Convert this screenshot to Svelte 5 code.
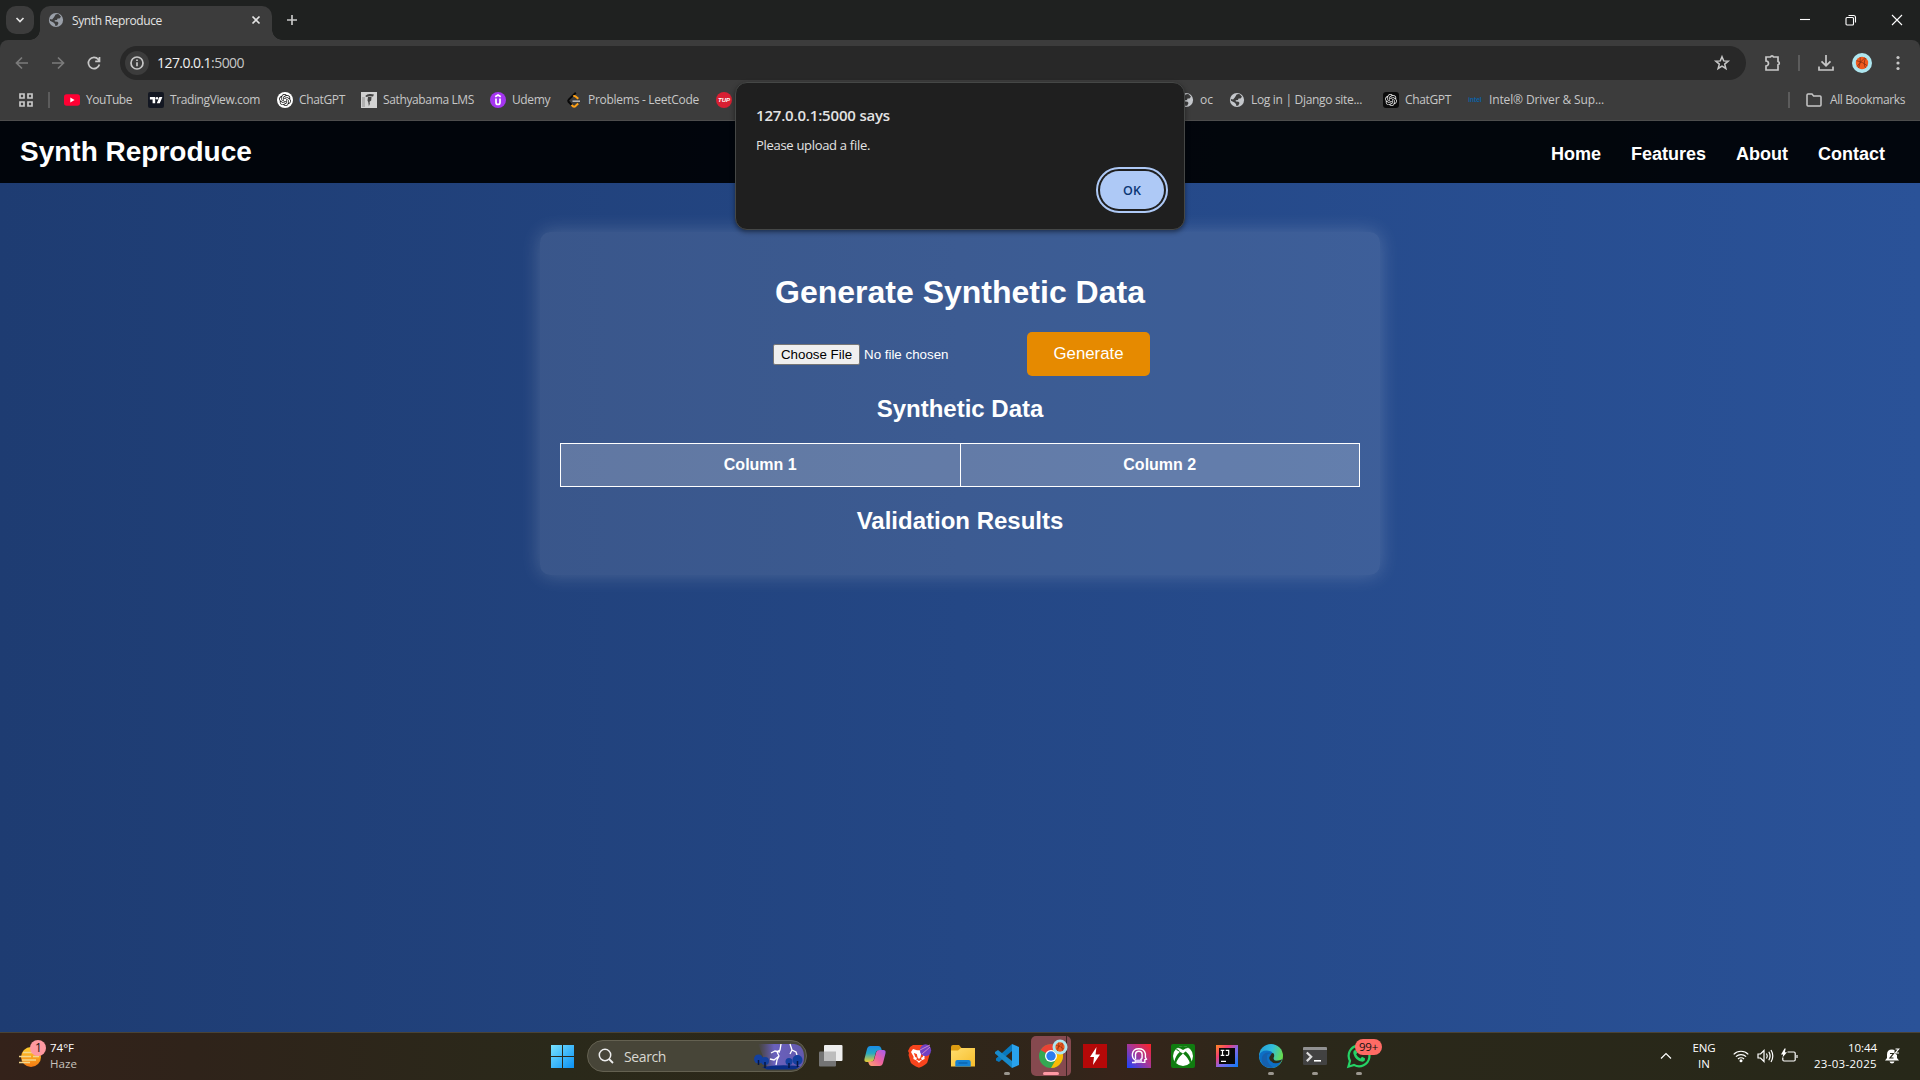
<script>
  // Adjusts a label's tracking so that its text spans the given width.
  function fit(node, width) {
    node.style.letterSpacing = '0px';
    const range = document.createRange();
    range.selectNodeContents(node);
    const natural = range.getBoundingClientRect().width;
    node.style.letterSpacing = `${(width - natural) / node.textContent.length}px`;
  }

  const bookmarks = [
    { icon: 'youtube', label: 'YouTube', width: 46 },
    { icon: 'tradingview', label: 'TradingView.com', width: 90, after: 1 },
    { icon: 'gpt', label: 'ChatGPT', width: 46 },
    { icon: 'lms', label: 'Sathyabama LMS', width: 91 },
    { icon: 'udemy', label: 'Udemy', width: 38 },
    { icon: 'leetcode', label: 'Problems - LeetCode', width: 111, after: 1 },
    { icon: 'tup', label: '', width: 0 },
  ];
  const moreBookmarks = [
    { icon: 'globe', label: 'oc', width: 13 },
    { icon: 'globe', label: 'Log in | Django site...', width: 111, after: 5 },
    { icon: 'gptdark', label: 'ChatGPT', width: 46 },
    { icon: 'intel', label: 'Intel® Driver & Sup...', width: 115 },
  ];
  const links = ['Home', 'Features', 'About', 'Contact'];
  const apps = [
    { icon: 'taskview' },
    { icon: 'copilot' },
    { icon: 'brave' },
    { icon: 'folder' },
    { icon: 'vscode', open: true },
    { icon: 'chrome', active: true },
    { icon: 'bolt' },
    { icon: 'head' },
    { icon: 'xbox' },
    { icon: 'idea' },
    { icon: 'edge', open: true },
    { icon: 'terminal', open: true },
    { icon: 'whatsapp', open: true },
  ];
</script>

{#snippet globe(tint)}
  <circle cx="8" cy="8" r="7.1" fill={tint} />
  <path d="M7.6 2.6q1.600-.9 3.200-.3l2.200 2.500-1.500 1.700H9.600L8.900 8 6.600 8.300l.3 1.200 2.600.2 1 1.400-1.200 2.300-1.900.7-.4-2.200-1.500-1.500L2 8.800l-.2-1.700 2.300.5L6 5.200z" fill="#3c3c3c" />
{/snippet}

{#snippet knot(fill)}
  <path {fill} transform="translate(2 2) scale(.5)" d="M22.2819 9.8211a5.9847 5.9847 0 0 0-.5157-4.9108 6.0462 6.0462 0 0 0-6.5098-2.9A6.0651 6.0651 0 0 0 4.9807 4.1818a5.9847 5.9847 0 0 0-3.9977 2.9 6.0462 6.0462 0 0 0 .7427 7.0966 5.98 5.98 0 0 0 .511 4.9107 6.051 6.051 0 0 0 6.5146 2.9001A5.9847 5.9847 0 0 0 13.2599 24a6.0557 6.0557 0 0 0 5.7718-4.2058 5.9894 5.9894 0 0 0 3.9977-2.9001 6.0557 6.0557 0 0 0-.7475-7.0729zm-9.022 12.6081a4.4755 4.4755 0 0 1-2.8764-1.0408l.1419-.0804 4.7783-2.7582a.7948.7948 0 0 0 .3927-.6813v-6.7369l2.02 1.1686a.071.071 0 0 1 .038.052v5.5826a4.504 4.504 0 0 1-4.4945 4.4944zm-9.6607-4.1254a4.4708 4.4708 0 0 1-.5346-3.0137l.142.0852 4.783 2.7582a.7712.7712 0 0 0 .7806 0l5.8428-3.3685v2.3324a.0804.0804 0 0 1-.0332.0615L9.74 19.9502a4.4992 4.4992 0 0 1-6.1408-1.6464zM2.3408 7.8956a4.485 4.485 0 0 1 2.3655-1.9728V11.6a.7664.7664 0 0 0 .3879.6765l5.8144 3.3543-2.0201 1.1685a.0757.0757 0 0 1-.071 0l-4.8303-2.7865A4.504 4.504 0 0 1 2.3408 7.872zm16.5963 3.8558L13.1038 8.364 15.1192 7.2a.0757.0757 0 0 1 .071 0l4.8303 2.7913a4.4944 4.4944 0 0 1-.6765 8.1042v-5.6772a.79.79 0 0 0-.407-.667zm2.0107-3.0231l-.142-.0852-4.7735-2.7818a.7759.7759 0 0 0-.7854 0L9.409 9.2297V6.8974a.0662.0662 0 0 1 .0284-.0615l4.8303-2.7866a4.4992 4.4992 0 0 1 6.6802 4.66zM8.3065 12.863l-2.02-1.1638a.0804.0804 0 0 1-.038-.0567V6.0742a4.4992 4.4992 0 0 1 7.3757-3.4537l-.142.0805L8.704 5.459a.7948.7948 0 0 0-.3927.6813zm1.0976-2.3654l2.602-1.4998 2.6069 1.4998v2.9994l-2.5974 1.4997-2.6067-1.4997Z" />
{/snippet}

{#snippet bookmarkIcon(name)}
  <svg class="fav" viewBox="0 0 16 16">
    {#if name === 'youtube'}
      <rect y="2.3" width="16" height="11.4" rx="2.6" fill="#f03" />
      <path d="M6.3 5.6v4.8L10.6 8z" fill="#fff" />
    {:else if name === 'tradingview'}
      <rect width="16" height="16" rx="2" fill="#131722" />
      <path d="M1.900 5h5.300v6.200H4.600V7.400H1.900zM11.400 5h3l-2.600 6.200h-3z" fill="#fff" />
      <circle cx="9" cy="6.2" r="1.3" fill="#fff" />
    {:else if name === 'gpt'}
      <circle cx="8" cy="8" r="8" fill="#fff" />
      {@render knot('#111')}
    {:else if name === 'gptdark'}
      <rect width="16" height="16" rx="3" fill="#0b0b0b" />
      {@render knot('#eee')}
    {:else if name === 'lms'}
      <rect width="16" height="16" fill="#d2d2d2" />
      <rect x="1" y="5" width="3" height="10" fill="#b0b0b0" />
      <path d="M4.500 3.700Q6 2 8.500 2q2.500-.2 4.500.6l-1 1.900-3.500-.3-3.600.8zM7 5h3.500l-.3 3.500-1.700 1.200.3 2-.9 2.500-.6-4-.8-1.700z" fill="#444" />
    {:else if name === 'udemy'}
      <circle cx="8" cy="8" r="8" fill="#a435f0" />
      <path d="M5.200 4.700 8 3l2.800 1.700M6 6.500v4a2 2 0 0 0 4 0v-4" fill="none" stroke="#fff" stroke-width="1.7" />
    {:else if name === 'leetcode'}
      <path d="M9.800.8 2.700 7.600q-1 1-.1 2.200l3 3.100" fill="none" stroke="#080808" stroke-width="2" />
      <path d="M7.300 4.400q1.200-.9 2.300 0l2.700 2.400M5.600 12.900l1.100 1.200q1.400 1.100 2.800 0l2.700-2.500" fill="none" stroke="#ffa116" stroke-width="2" />
      <path d="M6.500 9.200H14" stroke="#b3b3b3" stroke-width="1.600" />
    {:else if name === 'tup'}
      <circle cx="8" cy="8" r="8" fill="#d81f32" />
      <text x="8" y="10" text-anchor="middle" class="tup">TUP</text>
    {:else if name === 'globe'}
      {@render globe('#c4c7cb')}
    {:else if name === 'intel'}
      <text x="8" y="10.3" text-anchor="middle" class="intel">intel</text>
    {/if}
  </svg>
{/snippet}

{#snippet bookmark(item)}
  <span class="bookmark" style:margin-right="{item.after ?? 0}px">
    {@render bookmarkIcon(item.icon)}
    {#if item.label}
      <span class="bm-label" style:width="{item.width}px" use:fit={item.width}>{item.label}</span>
    {/if}
  </span>
{/snippet}

{#snippet ball(x, y, r)}
  <circle cx={x} cy={y} r={r} fill="#aee6ef" />
  <g transform="translate({x} {y}) scale({r / 10})">
    <circle r="6.2" fill="#f05a1e" />
    <path d="M-5.500-2.400Q1-1 5.400 2.800M-1.800-5.800Q-1 0-3.400 5M3-5.300Q-2-1-5 3.500M3.500-5Q1 1 3.500 4.800" fill="none" stroke="#7a2a12" stroke-width=".7" />
  </g>
{/snippet}

{#snippet appIcon(name)}
  <svg class="app-icon" viewBox="0 0 24 24">
    {#if name === 'taskview'}
      <rect x="0" y="7.5" width="17" height="15" rx="1" fill="#747474" />
      <rect x="5" y="1" width="18.5" height="16" rx="1" fill="#eee" />
      <path d="M5 7.500h12V17H5z" fill="#bdbdbd" />
    {:else if name === 'copilot'}
      <path d="M7.400 2h8q2 0 2.700 2l.8 2.600h-3.500q-2 0-2.600 2l-2 7.100q-.8 2.400-3.300 2.400H3.800q-3 0-2.300-3.300L4 5q.8-3 3.400-3z" fill="url(#copA)" />
      <path d="M16.600 22h-8q-2 0-2.700-2l-.8-2.600h3.500q2 0 2.600-2l2-7.100q.8-2.400 3.300-2.400h3.700q3 0 2.300 3.300L20 19q-.8 3-3.400 3z" fill="url(#copB)" />
    {:else if name === 'brave'}
      <path d="m6 1-3 2L1 7l1 2-.5 2 2.200 7.500Q5 21 12 23.800 19 21 20.300 18.500L22.500 11 22 9l1-2-4-4-3-2z" fill="#f7441d" />
      <path d="m6 5 4 1.200h4L18 5l2 3-2.600 4.700.2 2.200-3.200 1.700L12 19l-2.400-2.400L6.400 15l.2-2.300L4 8z" fill="#fff" />
      <path d="m6.800 9 3 1 .8 3.400L12 15l1.400-1.600.8-3.400 3-1-1.500 4-1.800 1 1 1.400-2.900 1.700-2.900-1.700 1-1.400-1.800-1z" fill="#f7441d" />
      <ellipse cx="18.5" cy="6.2" rx="5.6" ry="6" fill="#7040c4" />
      <path d="m13 6 10-5M15 10l8-7" stroke="#e49ac8" stroke-width=".8" />
    {:else if name === 'folder'}
      <path d="M0 3q0-2 2-2h6l2.500 3H22q2 0 2 2v4H0z" fill="#dd9c12" />
      <path d="M0 6.500h7L10 4h14v18.500H0z" fill="url(#folderG)" />
      <path d="M4.300 22.500V18q0-2 2-2h11.400q2 0 2 2v4.500z" fill="#1481d4" />
      <path d="M7.500 19h9" stroke="#0a5ea8" stroke-width="1.2" />
    {:else if name === 'vscode'}
      <path d="M17 0v7L4 18l-3-1.400v-2L17 0z" fill="#0878bd" />
      <path d="m0 8 3-2 14 11v7L0 9.600z" fill="#188acb" />
      <path d="M17 0 24 3v18l-7 3z" fill="#29a2ed" />
    {:else if name === 'chrome'}
      <circle cx="12" cy="12" r="12" fill="#34a853" />
      <path d="M12 12 1.600 6A12 12 0 0 1 22.400 6z" fill="#ea4335" />
      <path d="M12 6h10.400A12 12 0 0 1 12 24l5.200-9z" fill="#fbbc05" />
      <circle cx="12" cy="12" r="6" fill="#fff" />
      <circle cx="12" cy="12" r="4.7" fill="#2b7cf0" />
      {@render ball(21, 3, 7.5)}
    {:else if name === 'bolt'}
      <path d="M0 0h24v24H0z" fill="#b50808" />
      <path d="M13.500 3 7 13h4l-1 8 7-10.500h-4.500z" fill="#fff" />
    {:else if name === 'head'}
      <path d="M0 0h24v24H0z" fill="url(#headG)" />
      <path d="M5 18.500h3.400v-2.300q-3.500-2-3-6.400.8-5 6.400-5t6.600 5v3.600l1 1.700-1.600.7v2.600h-7.200M8.500 15V10.200q.2-3 3.400-3t3.200 3v3q0 2.200-2 2.200" fill="none" stroke="#fff" stroke-width="1.4" />
      <path d="M8.500 15.600h6.500V19H8.500z" fill="#e2cdf5" />
    {:else if name === 'xbox'}
      <rect width="24" height="24" rx="2" fill="#107c10" />
      <circle cx="12" cy="12" r="10" fill="#fff" />
      <path d="M5.600 4.300Q8 3.200 12 6q4-2.800 6.400-1.700Q15.600 2 12 2T5.600 4.300zM12 9.500q-6 5-6.800 9.800-.9-.6-1.700-1.900Q4.500 11.700 9.200 7.600L6.500 5.300 4.500 5.500M12 9.500q6 5 6.800 9.800.9-.6 1.700-1.900-1-5.700-5.700-9.800l2.700-2.300" fill="#107c10" />
    {:else if name === 'idea'}
      <path d="M1 1h22v22H1z" fill="url(#ideaG)" />
      <path d="M4 4h16v16H4z" fill="#090909" />
      <path d="M5.700 6.300h3.600M7.500 6.300v5M5.700 11.300h3.600M10.700 6.300h3v3.900q0 1.100-1.200 1.100h-1.700M6 17.300h5" fill="none" stroke="#fff" stroke-width="1.2" />
    {:else if name === 'edge'}
      <circle cx="12" cy="12" r="12" fill="url(#edgeA)" />
      <path d="M0 12Q1.400 6.300 8 6.500c5 .2 7.300 3.500 6.400 6.300-.7 2.500.8 4 3.800 4 2.500 0 4.400-1.200 5-1.500Q20.500 24 12 24 1 23 0 12z" fill="#0d6fc6" />
      <path d="M8.400 10.400Q6 18 14.400 23.600 1 25 3 13q1.600-4.700 6.700-4.500 3.500.2 4.800 3-2.700-3.500-6.100-1.100z" fill="#1560ae" />
      <path d="M11.500 11.500q-2.400 2.300-.2 5 3.700 4.500 10 1.800l1.900-2.900q-7.700 3-8.600-.5-.3-1 .5-2.500.4-1.800-.7-3.200-1.800-1-2.900 2.300z" fill="#2d2b19" />
    {:else if name === 'terminal'}
      <rect y="3" width="24" height="18" rx="1.3" fill="#424242" />
      <path d="M0 4.200Q0 3 1.200 3h21.600Q24 3 24 4.200V6H0z" fill="#929292" />
      <path d="m3.800 8.500 4.400 4.300-4.400 4.300" fill="none" stroke="#ddd" stroke-width="2.2" />
      <path d="M11 16.800h7" stroke="#fff" stroke-width="1.6" />
    {:else if name === 'whatsapp'}
      <path d="m1.400 22.700 1.600-5.800a10.400 10.400 0 1 1 4 4z" fill="none" stroke="#25d366" stroke-width="2.2" />
      <path d="M7 6.500q1.400-1.200 2.200 0l1 2.200-1 1.700q1.500 3 4.400 4l1.400-1.600 2.900 1.400q.6 3-2.500 3.500Q8.500 17.200 6.400 9.800 6 7.500 7 6.500z" fill="#25d366" />
    {/if}
  </svg>
{/snippet}

<svg class="defs">
  <defs>
    <linearGradient id="copA" x1="0" y1="0" x2="0" y2="1"><stop stop-color="#1a8be8" /><stop offset=".45" stop-color="#25a9c3" /><stop offset="1" stop-color="#efcf2c" /></linearGradient>
    <linearGradient id="copB" x1="1" y1="0" x2="0" y2="1"><stop stop-color="#a45cf3" /><stop offset=".5" stop-color="#ed629f" /><stop offset="1" stop-color="#ffa56b" /></linearGradient>
    <linearGradient id="folderG" x1="0" y1="0" x2="1" y2="1"><stop stop-color="#ffdd6e" /><stop offset="1" stop-color="#f7bd2b" /></linearGradient>
    <linearGradient id="headG" x1="1" y1="0" x2="0" y2="1"><stop stop-color="#ff2222" /><stop offset=".5" stop-color="#a4379c" /><stop offset="1" stop-color="#1644ff" /></linearGradient>
    <linearGradient id="ideaG" x1="0" y1="0" x2="1" y2="1"><stop stop-color="#ff8b22" /><stop offset=".3" stop-color="#f43f71" /><stop offset=".55" stop-color="#8267e8" /><stop offset="1" stop-color="#087cfa" /></linearGradient>
    <linearGradient id="edgeA" x1="0" y1="0" x2="1" y2=".35"><stop stop-color="#229bd7" /><stop offset=".55" stop-color="#31bddd" /><stop offset="1" stop-color="#66dc52" /></linearGradient>
    <linearGradient id="winG" x1="0" y1="0" x2="1" y2="1" gradientUnits="objectBoundingBox"><stop stop-color="#77e2ff" /><stop offset="1" stop-color="#0a91f5" /></linearGradient>
    <linearGradient id="sunG" x1="0" y1="0" x2="0" y2="1"><stop stop-color="#ffce2e" /><stop offset="1" stop-color="#f47912" /></linearGradient>
    <linearGradient id="stormG" x1="0" y1="0" x2="1" y2="0"><stop stop-color="#5c54a8" stop-opacity="0" /><stop offset=".35" stop-color="#6a61bd" /><stop offset="1" stop-color="#6359ad" /></linearGradient>
  </defs>
</svg>

<div class="screen">
  <header class="tabs">
    <span class="tab-search"><svg width="10" height="10" viewBox="0 0 10 10"><path d="m1.500 3 3.500 3.500L8.500 3" class="line bright" /></svg></span>
    <div class="tab">
      <svg width="16" height="16" viewBox="0 0 16 16">{@render globe('#9aa0a9')}</svg>
      <span class="tab-title" use:fit={90}>Synth Reproduce</span>
      <svg width="10" height="10" viewBox="0 0 10 10"><path d="m1.500 1.500 7 7m0-7-7 7" class="line bright" /></svg>
    </div>
    <svg class="new-tab" width="12" height="12" viewBox="0 0 12 12"><path d="M6 1v10M1 6h10" class="line" /></svg>
    <div class="window-buttons">
      <svg width="12" height="12" viewBox="0 0 12 12"><path d="M1 5.500h10" class="thin" /></svg>
      <svg width="12" height="12" viewBox="0 0 12 12"><rect x="1" y="3.500" width="7.500" height="7.500" rx="1" class="thin" /><path d="M3.500 1.500h5q2 0 2 2v5" class="thin" /></svg>
      <svg width="12" height="12" viewBox="0 0 12 12"><path d="m1 1 10 10M11 1 1 11" class="thin" /></svg>
    </div>
  </header>

  <div class="toolbar">
    <div class="nav-buttons">
      <svg width="14" height="14" viewBox="0 0 14 14"><path d="M13 7H1.500M7 1.500 1.500 7 7 12.500" class="line dim" /></svg>
      <svg width="14" height="14" viewBox="0 0 14 14"><path d="M1 7h11.500M7 1.500 12.500 7 7 12.500" class="line dim" /></svg>
      <svg width="14" height="14" viewBox="0 0 14 14"><path d="M12.400 8.500A5.600 5.600 0 1 1 11.300 3.400L12.300 4.700M12.500 1v4.300H8.200" class="line" /></svg>
    </div>
    <div class="omnibox">
      <span class="site-info"><svg width="14" height="14" viewBox="0 0 14 14"><circle cx="7" cy="7" r="6" class="line" /><path d="M7 6.200v4M7 3.600v1.500" class="line" /></svg></span>
      <span class="url" use:fit={87}>127.0.0.1<span class="port">:5000</span></span>
      <svg class="star" width="16" height="16" viewBox="0 0 16 16"><path d="m8 1.700 1.700 4.200 4.500.3-3.500 2.900 1.200 4.400L8 11.100l-3.900 2.400 1.200-4.400-3.500-2.900 4.500-.3z" class="line slim" /></svg>
    </div>
    <svg class="puzzle" width="18" height="18" viewBox="0 0 18 18"><path d="M2 3h4.500a1.600 1.600 0 0 1 3 0H14v4.500a1.700 1.700 0 0 1 0 3.300V16H2v-4a2.400 2.400 0 0 0 0-5z" class="line" /></svg>
    <i class="sep tool-sep"></i>
    <svg class="download" width="18" height="18" viewBox="0 0 18 18"><path d="M9 1v10.500M4.500 7.300 9 11.700l4.500-4.400M2 12.500V16h14v-3.500" class="line" /></svg>
    <svg class="avatar" width="20" height="20" viewBox="0 0 20 20">{@render ball(10, 10, 10)}</svg>
    <svg class="dots" width="4" height="16" viewBox="0 0 4 16"><g fill="#c7c7c7"><circle cx="2" cy="2.500" r="1.600" /><circle cx="2" cy="8" r="1.600" /><circle cx="2" cy="13.500" r="1.600" /></g></svg>
  </div>

  <div class="bookmarks">
    <svg class="grid-icon" width="14" height="14" viewBox="0 0 14 14"><path d="M1 1h4v4H1zM9 1h4v4H9zM1 9h4v4H1zM9 9h4v4H9z" class="line" /></svg>
    <i class="sep"></i>
    <div class="bm-list first">
      {#each bookmarks as item}{@render bookmark(item)}{/each}
    </div>
    <div class="bm-list">
      {#each moreBookmarks as item}{@render bookmark(item)}{/each}
    </div>
    <div class="all">
      <i class="sep"></i>
      <svg width="16" height="14" viewBox="0 0 16 14"><path d="M1 2q0-1 1-1h4l1.600 2H14q1 0 1 1v8q0 1-1 1H2q-1 0-1-1z" class="line slim" /></svg>
      <span class="bm-label" use:fit={75}>All Bookmarks</span>
    </div>
  </div>

  <main class="page">
    <nav class="site-nav">
      <span class="brand">Synth Reproduce</span>
      <div class="links">
        {#each links as link}<a href="#{link.toLowerCase()}">{link}</a>{/each}
      </div>
    </nav>
    <section class="card">
      <h1>Generate Synthetic Data</h1>
      <div class="form">
        <button class="choose">Choose File</button>
        <span class="no-file">No file chosen</span>
        <button class="generate">Generate</button>
      </div>
      <h2>Synthetic Data</h2>
      <table>
        <thead><tr><th>Column 1</th><th>Column 2</th></tr></thead>
      </table>
      <h2 class="results">Validation Results</h2>
    </section>
  </main>

  <footer class="taskbar">
    <div class="weather">
      <svg width="30" height="32" viewBox="0 0 30 32">
        <circle cx="15" cy="17" r="10" fill="url(#sunG)" />
        <path d="M7 12.500h12M3 16.500h12m2 0h6M6 20h14M3 22.500h11" stroke="#f3d78b" stroke-width="1.500" />
        <circle cx="22" cy="8" r="8" fill="#ff99a0" />
        <text x="22.500" y="12" text-anchor="middle" class="count">1</text>
      </svg>
      <div class="weather-text"><span use:fit={24}>74°F</span><span class="muted" use:fit={27}>Haze</span></div>
    </div>
    <svg class="start" width="23" height="23" viewBox="0 0 23 23"><path d="M0 0h11v11H0zM12 0h11v11H12zM0 12h11v11H0zM12 12h11v11H12z" fill="url(#winG)" /></svg>
    <div class="search">
      <svg width="16" height="16" viewBox="0 0 16 16"><circle cx="7" cy="7" r="5.700" fill="none" stroke="#eee" stroke-width="1.500" /><path d="m11 11 4 4" stroke="#eee" stroke-width="1.800" /></svg>
      <span use:fit={42}>Search</span>
      <svg class="storm" width="50" height="27" viewBox="0 0 50 27">
        <path d="M4 1h36q10 1 10 13T40 26H14z" fill="url(#stormG)" />
        <path d="m27 1-1 6-3 2 2 4-2 4-1 5m3-9-5 4-4-1m10-7-5-1-4 2M36 1l2 6 4 2 1 3m-5-5-2 4" fill="none" stroke="#fff" stroke-width="1.300" />
        <g fill="#14409f"><circle cx="4.500" cy="16" r="4.500" /><circle cx="11" cy="18" r="4" /><circle cx="35" cy="18.500" r="3.500" /><circle cx="43.500" cy="17" r="5" /></g>
        <path d="M8 24q16-3 38-1-3 3.500-8 3.500H13z" fill="#0a2d86" />
        <path d="M4.500 17v5m6.500-3v6m24-5v5m8.500-7v6" stroke="#061642" stroke-width="1.500" />
      </svg>
    </div>
    <div class="apps">
      {#each apps as app}
        <span class="app" class:active={app.active} class:open={app.open}>
          {@render appIcon(app.icon)}
          {#if app.icon === 'whatsapp'}<b class="badge" use:fit={19}>99+</b>{/if}
        </span>
      {/each}
    </div>
    <div class="tray">
      <svg class="chevron" width="12" height="8" viewBox="0 0 12 8"><path d="m1 6.500 5-5 5 5" class="white" /></svg>
      <div class="lang"><span use:fit={23}>ENG</span><span use:fit={12}>IN</span></div>
      <svg class="wifi" width="16" height="14" viewBox="0 0 16 14"><path d="M.7 5.300a10.300 10.300 0 0 1 14.600 0M2.900 7.700a7.200 7.200 0 0 1 10.200 0M5 10a4.200 4.200 0 0 1 6 0" class="white" /><circle cx="8" cy="11.800" r="1.500" fill="#fff" /></svg>
      <svg width="17" height="14" viewBox="0 0 17 14"><path d="M1 5h2.500L7 1.500v11L3.500 9H1zM9.500 4.500q1.600 2.500 0 5M11.800 2.800q2.600 4.200 0 8.400M14 1q3.600 6 0 12" class="white" /></svg>
      <svg class="battery" width="17" height="14" viewBox="0 0 17 14"><path d="M6.500 3h6.500q1.200 0 1.200 1.200v6.600q0 1.200-1.200 1.200H3q-1.200 0-1.200-1.200V8.500M16 6v3" class="white" /><path d="M3.500-.5 0 5.500h2.200L1.500 8.500 6 3.200H3.900L4.700-.5z" fill="#fff" /></svg>
      <div class="clock"><span use:fit={29}>10:44</span><span use:fit={63}>23-03-2025</span></div>
      <svg class="bell" width="15" height="16" viewBox="0 0 15 16"><path d="M0 12.500 2 10V6.500Q2 1.500 7 1.500q1.500 0 2.500.5v3l2.500 2v3l2 2.500zM4.500 13.500h5q-.5 2-2.500 2t-2.500-2z" fill="#fff" /><path d="M5 5.500h3.500L5 10h3.500" fill="none" stroke="#27281a" stroke-width="1.200" /><path d="M10.500 1h3.200l-3.200 4h3.500" class="white" /></svg>
    </div>
  </footer>

  <div class="dialog" role="alertdialog">
    <strong><span use:fit={134}>127.0.0.1:5000 says</span></strong>
    <p><span use:fit={114}>Please upload a file.</span></p>
    <button class="ok">OK</button>
  </div>
</div>

<style>
  :global(body) { overflow: hidden; background: #1f2120; }
  * { box-sizing: border-box; }
  svg { display: block; flex: none; overflow: visible; }
  button { border: 0; margin: 0; padding: 0; font-family: inherit; }
  .defs { position: absolute; width: 0; height: 0; }
  .screen { position: relative; display: flex; flex-direction: column; width: 1920px; height: 1080px; overflow: hidden; background: #1f2120; font-family: "Open Sans", "Noto Sans", sans-serif; font-size: 12px; white-space: nowrap; }
  .line { fill: none; stroke: #c7c7c7; stroke-width: 1.7; }
  .bright { stroke: #e3e3e3; }
  .dim { stroke: #7b7b7b; }
  .slim { stroke-width: 1.5; }
  .thin { fill: none; stroke: #fff; stroke-width: 1.1; }
  .white { fill: none; stroke: #fff; stroke-width: 1.2; }

  .tabs { display: flex; align-items: center; height: 40px; padding: 0 17px 0 6px; background: #1f2120; }
  .tab-search { display: grid; place-items: center; width: 28px; height: 28px; border-radius: 10px; background: #3c3c3c; }
  .tab { position: relative; display: flex; align-items: center; align-self: flex-end; width: 232px; height: 34px; margin-left: 6px; padding: 0 11px 6px 8px; border-radius: 10px 10px 0 0; background: #3c3c3c; }
  .tab::before, .tab::after { content: ""; position: absolute; bottom: 0; width: 10px; height: 10px; }
  .tab::before { left: -10px; background: radial-gradient(circle at 0 0, transparent 9.5px, #3c3c3c 10px); }
  .tab::after { right: -10px; background: radial-gradient(circle at 100% 0, transparent 9.5px, #3c3c3c 10px); }
  .tab-title { flex: 1; margin-left: 8px; padding-top: 2px; color: #e3e3e3; line-height: 18px; }
  .new-tab { margin-left: 14px; }
  .window-buttons { display: flex; gap: 34px; margin-left: auto; }

  .toolbar { display: flex; align-items: center; height: 46px; border-radius: 8px 8px 0 0; background: #3c3c3c; }
  .nav-buttons { display: flex; gap: 22px; width: 120px; padding-left: 15px; }
  .omnibox { display: flex; align-items: center; width: 1626px; height: 34px; padding: 0 16px 0 5px; border-radius: 17px; background: #282828; }
  .site-info { display: grid; place-items: center; width: 24px; height: 24px; border-radius: 50%; background: #3c3c3c; }
  .url { margin-left: 8px; color: #f0f0f0; font-size: 14px; line-height: 20px; }
  .port { color: #c7c7c7; }
  .star { margin-left: auto; }
  .puzzle { margin-left: 18px; }
  .sep { width: 2px; height: 16px; background: #5c5c5c; }
  .tool-sep { margin-left: 16px; }
  .download { margin-left: 17px; }
  .avatar { margin-left: 17px; }
  .dots { margin-left: 24px; }

  .bookmarks { display: flex; align-items: center; height: 35px; padding: 0 15px 6px 19px; background: #3c3c3c; border-bottom: 1px solid #4d4d4d; }
  .bookmarks .grid-icon { margin-right: 15px; }
  .bm-list { display: flex; gap: 16px; }
  .bm-list.first { width: 1114px; margin-left: 14px; }
  .bookmark { display: flex; align-items: center; gap: 6px; }
  .fav { width: 16px; height: 16px; }
  .bm-label { color: #c7c7c7; line-height: 18px; }
  .tup { font: italic 900 6px "Liberation Sans", sans-serif; fill: #fff; }
  .intel { font: bold 6.5px "Liberation Sans", sans-serif; fill: #0a62a8; }
  .all { display: flex; align-items: center; gap: 8px; margin-left: auto; }
  .all svg { margin-left: 8px; }

  .page { height: 911px; background: linear-gradient(to right, #1e3c72, #2a5298); color: #fff; font-family: "Liberation Sans", Arial, sans-serif; }
  .site-nav { display: flex; align-items: center; justify-content: space-between; height: 62px; padding: 0 35px 0 20px; background: rgb(0 2 5 / 95%); font-weight: bold; }
  .brand { font-size: 28px; line-height: 32px; }
  .links { display: flex; gap: 30px; padding-top: 4px; font-size: 18px; line-height: 20px; }
  .links a { color: inherit; text-decoration: none; }
  .card { width: 840px; height: 343px; margin: 49px auto 0; padding: 41px 20px 0; border-radius: 10px; background: rgb(255 255 255 / 11%); box-shadow: 0 0 20px rgb(255 255 255 / 20%); text-align: center; }
  h1, h2 { margin: 0; }
  h1 { font-size: 32px; line-height: 38px; }
  .form { display: flex; align-items: center; width: 377px; height: 44px; margin: 21px 0 0 213px; font-size: 13.333px; }
  .choose { width: 87px; height: 21px; border: 1px solid #767676; border-radius: 2px; background: #efefef; color: #000; font-size: 13.333px; line-height: 17px; }
  .no-file { margin-left: 4px; }
  .generate { width: 123px; height: 44px; margin-left: auto; padding-bottom: 2px; border-radius: 5px; background: #e68a00; color: #fff; font-size: 16.8px; line-height: 19px; }
  h2 { margin-top: 19px; font-size: 24px; line-height: 28px; }
  table { width: 800px; height: 44px; margin-top: 20px; border-collapse: collapse; table-layout: fixed; }
  th { padding: 0; border: 1px solid #fff; background: rgb(255 255 255 / 20%); font-size: 16px; line-height: 18px; }
  .results { margin-top: 20px; }

  .taskbar { display: flex; align-items: center; height: 48px; padding-bottom: 1px; border-top: 1px solid #4a4335; background: linear-gradient(to right, #34221a 0, #2f231a 10%, #2a291a 29%, #2d2819 43%, #31251a 55%, #36241a 58%, #2b281a 67%, #272819 100%); color: #fff; }
  .weather { display: flex; align-items: center; width: 551px; padding-left: 16px; }
  .count { font: 12px "Open Sans", sans-serif; fill: #111; }
  .weather-text { display: flex; flex-direction: column; margin-left: 4px; font-size: 11.5px; line-height: 16px; }
  .muted { color: #c8c3bd; }
  .start { margin-right: 13px; }
  .search { display: flex; align-items: center; width: 220px; height: 32px; padding: 0 2px 0 10px; border: 1px solid #646151; border-radius: 16px; background: #474538; color: #d9d8d2; font-size: 14px; }
  .search > span { margin-left: 10px; }
  .search .storm { margin-left: auto; }
  .apps { display: flex; margin-left: 2px; }
  .app { position: relative; display: grid; place-items: center; width: 44px; height: 46px; }
  .app-icon { position: relative; width: 24px; height: 24px; }
  .app.open::after { content: ""; position: absolute; bottom: 4px; left: 19px; width: 6px; height: 3px; border-radius: 2px; background: #9b978f; }
  .app.active::before { content: ""; position: absolute; inset: 3px 2px; border-radius: 5px; background: linear-gradient(to right, #86494f 35px, #3c2523 35px, #3c2523 36px, #86494f 36px); }
  .app.active::after { content: ""; position: absolute; bottom: 4px; left: 14px; width: 16px; height: 3px; border-radius: 2px; background: #ff99a4; }
  .badge { position: absolute; top: 6px; left: 18px; width: 27px; height: 16px; border-radius: 8px; background: #ff6b65; color: #111; font-size: 11.5px; font-weight: 400; line-height: 15px; text-align: center; }
  .tray { display: flex; align-items: center; margin-left: auto; padding-right: 20px; font-size: 11.5px; line-height: 16px; }
  .lang, .clock { display: flex; flex-direction: column; }
  .lang { align-items: center; width: 24px; margin: 0 17px 0 20px; }
  .wifi { margin-right: 8px; }
  .battery { margin-left: 7px; }
  .clock { align-items: flex-end; width: 64px; margin: 0 8px 0 15px; }

  .dialog { position: absolute; top: 82px; left: 735px; display: flex; flex-direction: column; width: 450px; height: 148px; padding: 21px 20px 19px; border: 1px solid #454746; border-radius: 12px; background: #1f1f1f; box-shadow: 0 2px 5px rgb(0 0 0 / 45%); color: #e3e3e3; }
  .dialog strong { font-size: 15px; font-weight: 600; line-height: 22px; }
  .dialog p { margin: 10px 0 0; font-size: 13px; line-height: 18px; }
  .ok { align-self: flex-end; width: 64px; height: 38px; margin: 17px 0 0; border-radius: 19px; background: #aec9f6; color: #0b3674; outline: 2px solid #aec9f6; outline-offset: 2px; font-size: 12.5px; font-weight: 600; }
</style>
